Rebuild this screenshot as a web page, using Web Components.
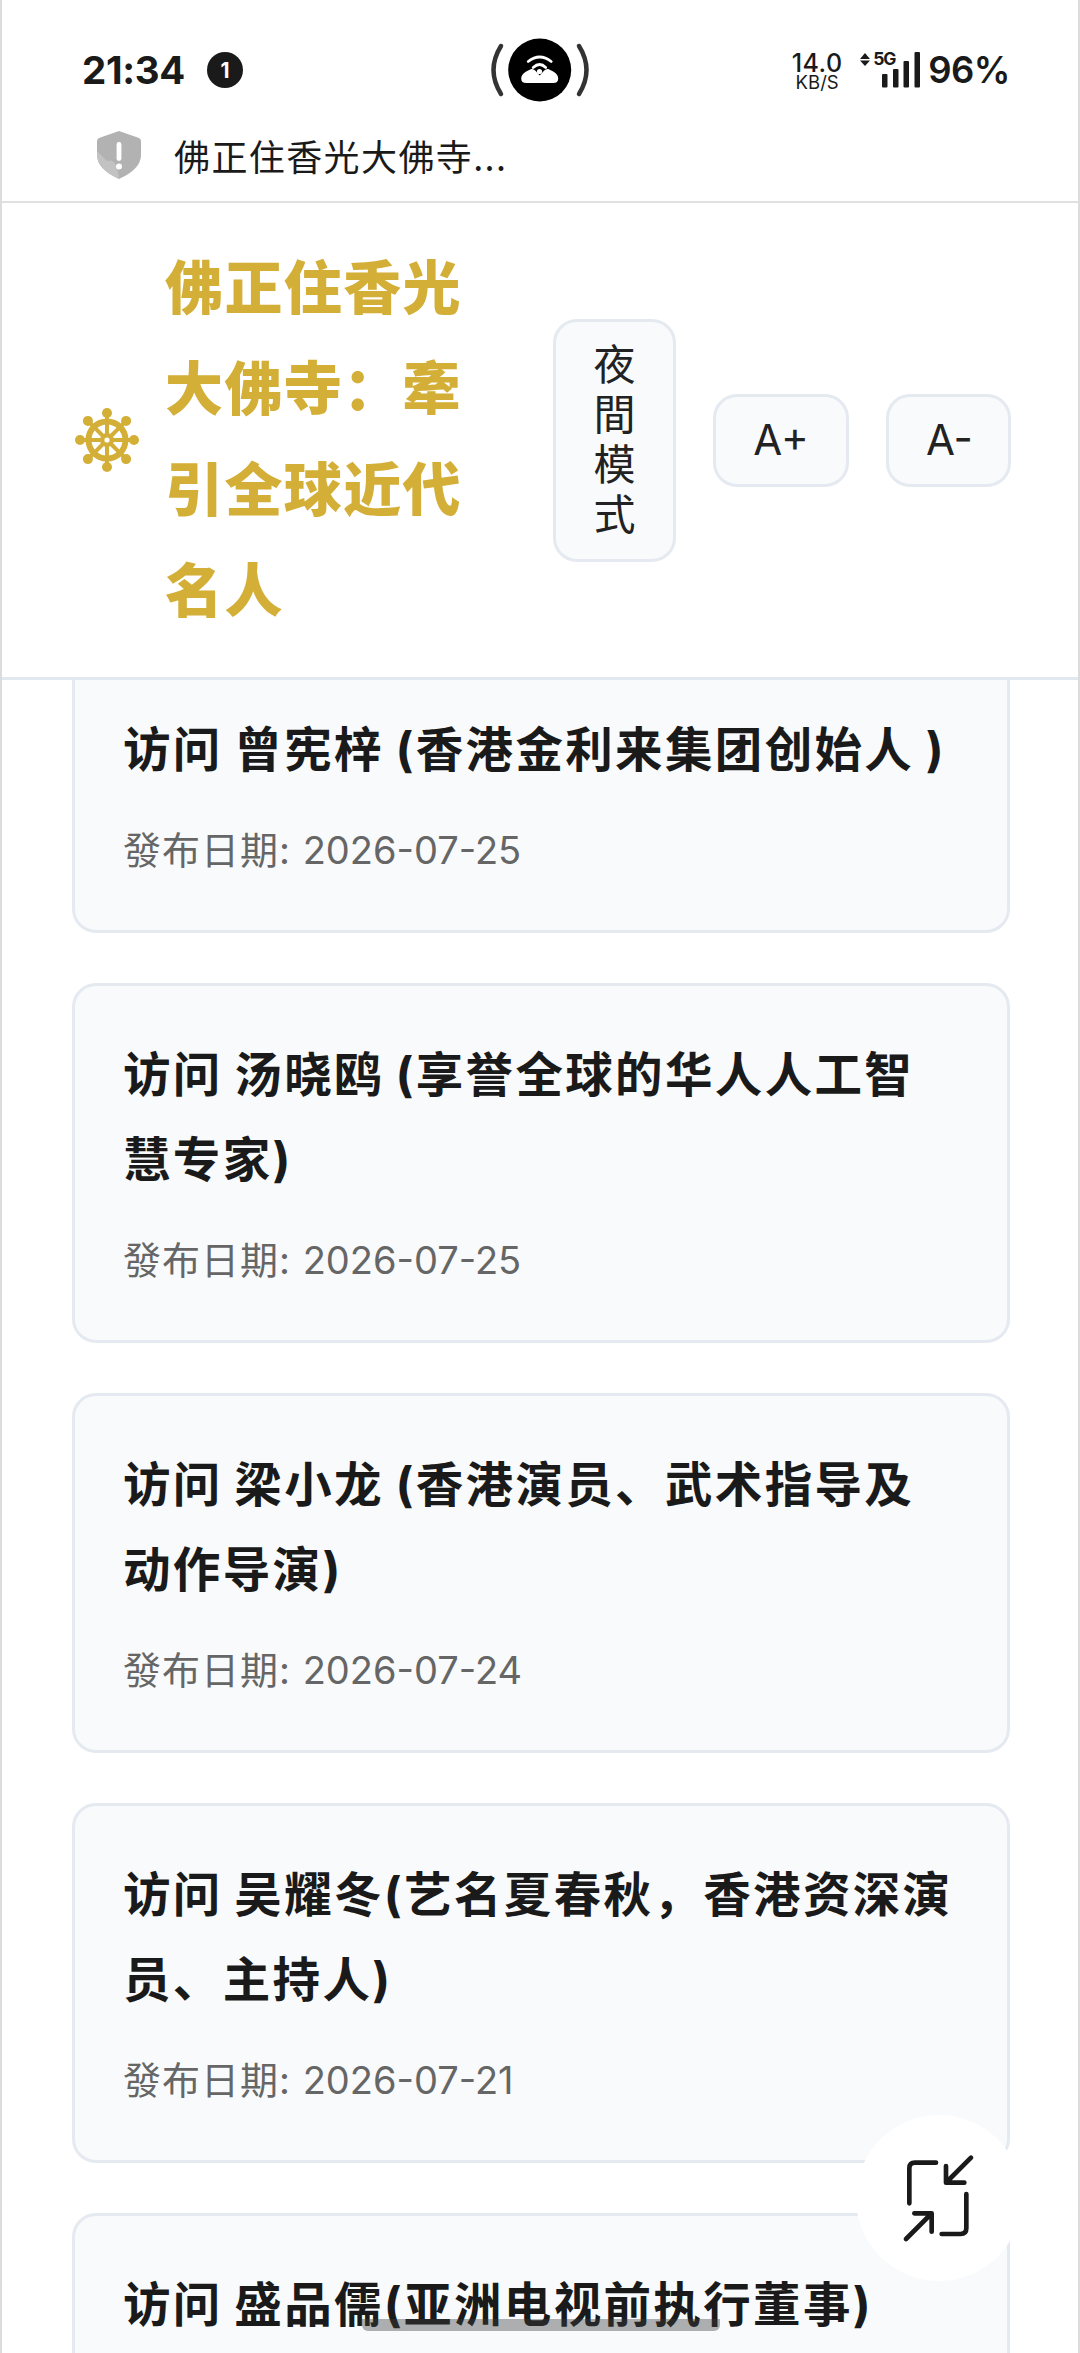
<!DOCTYPE html>
<html lang="zh">
<head>
<meta charset="utf-8">
<title>佛正住香光大佛寺</title>
<style>
  html, body { margin: 0; padding: 0; background: #fff; }
  body {
    width: 1080px;
    height: 2353px;
    overflow: hidden;
    font-family: Inter, "Noto Sans CJK SC", sans-serif;
  }
</style>
</head>
<body>
<phone-frame>
  <status-bar></status-bar>
  <tab-title>佛正住香光大佛寺...</tab-title>
  <site-header>
    佛正住香光大佛寺：牽引全球近代名人
    <font-button slot="actions" style="--w:123px">夜間模式</font-button>
    <font-button slot="actions" style="--w:136px">A+</font-button>
    <font-button slot="actions" style="--w:125px">A-</font-button>
  </site-header>
  <article-list>
    <article-card date="2026-07-25">访问 曾宪梓 (香港金利来集团创始人 )</article-card>
    <article-card date="2026-07-25">访问 汤晓鸥 (享誉全球的华人人工智慧专家)</article-card>
    <article-card date="2026-07-24">访问 梁小龙 (香港演员、武术指导及动作导演)</article-card>
    <article-card date="2026-07-21">访问 吴耀冬(艺名夏春秋，香港资深演员、主持人)</article-card>
    <article-card>访问 盛品儒(亚洲电视前执行董事)</article-card>
  </article-list>
  <float-button></float-button>
  <home-bar></home-bar>
</phone-frame>

<script>
class PhoneFrame extends HTMLElement {
  constructor() {
    super();
    this.attachShadow({ mode: "open" }).innerHTML = `
    <style>
      :host {
        display: flex;
        flex-direction: column;
        position: relative;
        box-sizing: border-box;
        width: 1080px;
        height: 2353px;
        overflow: hidden;
        background: #fff;
        border-left: 2px solid #dcdcdc;
        border-right: 2px solid #dcdcdc;
      }
    </style>
    <slot></slot>`;
  }
}

class StatusBar extends HTMLElement {
  constructor() {
    super();
    this.attachShadow({ mode: "open" }).innerHTML = `
    <style>
      :host {
        display: grid;
        grid-template-columns: 408px 100px 1fr;
        align-items: center;
        box-sizing: border-box;
        height: 120px;
        padding: 20px 68px 0 80px;
        color: #1a1a1a;
        font-family: Inter, sans-serif;
      }
      .left { display: flex; align-items: center; gap: 22px; }
      .time { font-size: 38.5px; font-weight: 700; letter-spacing: -0.3px; }
      .badge {
        width: 36px; height: 36px; border-radius: 50%;
        background: #1a1a1a; color: #fff;
        display: flex; align-items: center; justify-content: center;
        font-size: 21px; font-weight: 700;
      }
      .center { display: block; overflow: visible; }
      .right { display: flex; align-items: center; justify-content: flex-end; }
      .speed { display: flex; flex-direction: column; align-items: center; width: 52px; margin-top: 2px; }
      .speed b { font-size: 25px; font-weight: 500; line-height: 21px; letter-spacing: 0.5px; }
      .speed span { font-size: 18.5px; font-weight: 400; line-height: 16px; }
      .net { position: relative; width: 60px; height: 36px; margin: 0 8px 0 17px; }
      .net svg { position: absolute; left: 0; top: 0; }
      .net b { position: absolute; left: 13px; top: -1px; font-size: 17.5px; line-height: 16px; font-weight: 700; letter-spacing: -1.2px; }
      .pct { font-size: 36.5px; font-weight: 600; letter-spacing: -0.5px; }
    </style>
    <div class="left"><span class="time">21:34</span><span class="badge">1</span></div>
    <svg class="center" width="100" height="64" viewBox="0 0 100 64">
      <path d="M11 8Q-4 32 11 56" fill="none" stroke="#333" stroke-width="4.5" stroke-linecap="round"/>
      <path d="M89 8Q104 32 89 56" fill="none" stroke="#333" stroke-width="4.5" stroke-linecap="round"/>
      <circle cx="49.7" cy="32" r="31.5" fill="#000"/>
      <g transform="translate(18.2 0.5)">
        <path d="M18 44.5H45Q50 44.5 50 40Q50 36 45 33L40 30.5Q38 30 36 32L31.5 37L27 32Q25 30 23 30.5L18 33Q13 36 13 40Q13 44.5 18 44.5Z" fill="#fff"/>
        <path d="M20 23Q31.5 14 43 23M25 29Q31.5 23 37.5 29" fill="none" stroke="#fff" stroke-width="2.8" stroke-linecap="round"/>
        <circle cx="31.3" cy="33" r="2.6" fill="#fff"/>
      </g>
    </svg>
    <div class="right">
      <div class="speed"><b>14.0</b><span>KB/S</span></div>
      <div class="net">
        <svg width="60" height="36" viewBox="0 0 60 36" fill="#1a1a1a">
          <path d="M5 1L10 7H0ZM5 14L10 8.5H0Z"/>
          <rect x="22" y="22" width="5.5" height="13.5" rx="1"/>
          <rect x="33" y="17" width="5.5" height="18.5" rx="1"/>
          <rect x="43.5" y="9" width="5.5" height="26.5" rx="1"/>
          <rect x="54.5" y="0" width="5.5" height="35.5" rx="1"/>
        </svg>
        <b>5G</b>
      </div>
      <span class="pct">96%</span>
    </div>`;
  }
}

class TabTitle extends HTMLElement {
  constructor() {
    super();
    this.attachShadow({ mode: "open" }).innerHTML = `
    <style>
      :host {
        display: flex;
        align-items: center;
        gap: 33px;
        box-sizing: border-box;
        height: 83px;
        padding: 11px 0 22px 95px;
        border-bottom: 2px solid #e0e0e0;
        color: #1a1a1a;
        font: 400 36px/48px "Noto Sans CJK SC", sans-serif;
        letter-spacing: 1.4px;
      }
      svg { flex: none; }
    </style>
    <svg width="44" height="48" viewBox="0 0 44 48">
      <path d="M22 0L42 7Q44 8 44 10V24Q44 38 22 48Q0 38 0 24V10Q0 8 2 7Z" fill="#b2b2b2"/>
      <path d="M22 48Q0 38 0 24V20L10 30Q20 26 22 48Z" fill="#c6c6c6" opacity=".8"/>
      <rect x="19.6" y="11" width="4.8" height="19" rx="2.4" fill="#fff"/>
      <circle cx="22" cy="35.5" r="3" fill="#fff"/>
    </svg>
    <span><slot></slot></span>`;
  }
}

class SiteHeader extends HTMLElement {
  constructor() {
    super();
    const spokes = [0, 45, 90, 135, 180, 225, 270, 315]
      .map((a) => `<g transform="rotate(${a})"><rect x="-2" y="-27" width="4" height="27"/><circle cy="-27" r="5"/></g>`)
      .join("");
    this.attachShadow({ mode: "open" }).innerHTML = `
    <style>
      :host {
        display: flex;
        align-items: center;
        flex: none;
        box-sizing: border-box;
        height: 477px;
        padding: 0 67px 0 73px;
        background: #fff;
        border-bottom: 3px solid #e2e8f0;
        position: relative;
        z-index: 2;
      }
      svg { flex: none; }
      h1 {
        flex: 1;
        margin: -9px 0 0 26px;
        max-width: 300px;
        color: #d4af37;
        font: 900 58px/101px "Noto Sans CJK SC", sans-serif;
        letter-spacing: 1.4px;
      }
      .actions { display: flex; align-items: center; gap: 37px; margin-left: auto; }
    </style>
    <svg width="64" height="64" viewBox="-32 -32 64 64" fill="#d4af37">
      ${spokes}
      <circle r="18.5" fill="none" stroke="#d4af37" stroke-width="6"/>
      <circle r="7"/>
      <circle r="2.6" fill="#fff"/>
    </svg>
    <h1><slot></slot></h1>
    <div class="actions"><slot name="actions"></slot></div>`;
  }
}

class FontButton extends HTMLElement {
  constructor() {
    super();
    this.attachShadow({ mode: "open" }).innerHTML = `
    <style>
      :host {
        display: block;
        box-sizing: border-box;
        width: var(--w, min-content);
        padding: 18.5px 37px;
        background: #f8fafc;
        border: 3px solid #e5eaf1;
        border-radius: 24px;
        color: #222;
        font: 400 42px/50px Inter, "Noto Sans CJK SC", sans-serif;
        text-align: center;
      }
    </style>
    <slot></slot>`;
  }
}

class ArticleList extends HTMLElement {
  constructor() {
    super();
    this.attachShadow({ mode: "open" }).innerHTML = `
    <style>
      :host {
        display: block;
        flex: 1;
        min-height: 0;
        overflow: hidden;
        padding: 0 68px 0 70px;
      }
      .track { display: flex; flex-direction: column; gap: 50px; margin-top: -22px; }
    </style>
    <div class="track"><slot></slot></div>`;
  }
}

class ArticleCard extends HTMLElement {
  constructor() {
    super();
    this.attachShadow({ mode: "open" }).innerHTML = `
    <style>
      :host {
        display: block;
        box-sizing: border-box;
        padding: 46px 51px 50px 48px;
        background: #f8fafc;
        border: 3px solid #e5eaf1;
        border-radius: 24px;
      }
      h3 {
        margin: 0;
        color: #1a1a1a;
        font: 700 47.5px/85px Inter, "Noto Sans CJK SC", sans-serif;
        letter-spacing: 2.35px;
        word-spacing: -2px;
      }
      p {
        margin: 28px 0 0;
        color: #666;
        font: 400 38px/60px Inter, "Noto Sans CJK TC", sans-serif;
      }
      .label { letter-spacing: 1px; }
    </style>
    <h3><slot></slot></h3>
    <p><span class="label">發布日期: </span><span class="date"></span></p>`;
    // the last card runs off the bottom of the window, its date is not visible
    const date = this.getAttribute("date");
    if (date) this.shadowRoot.querySelector(".date").textContent = date;
    else this.shadowRoot.querySelector("p").remove();
  }
}

class FloatButton extends HTMLElement {
  constructor() {
    super();
    this.attachShadow({ mode: "open" }).innerHTML = `
    <style>
      :host {
        position: absolute;
        left: 853.5px;
        top: 2115px;
        width: 166px;
        height: 166px;
        border-radius: 50%;
        background: #fff;
        z-index: 3;
      }
      svg { position: absolute; left: 0; top: 0; }
    </style>
    <svg width="166" height="166" viewBox="225 165 498 498" fill="none" stroke="#1a1a1a" stroke-width="14" stroke-linecap="round" stroke-linejoin="round">
      <path d="M465 308H402Q385 308 385 325V430"/>
      <path d="M570 293L497 366M495 318V368H550"/>
      <path d="M556 402V505Q556 522 539 522H482"/>
      <path d="M375 537L450 462M400 460H452V515"/>
    </svg>`;
  }
}

class HomeBar extends HTMLElement {
  constructor() {
    super();
    this.attachShadow({ mode: "open" }).innerHTML = `
    <style>
      :host {
        position: absolute;
        left: 360px;
        top: 2319px;
        width: 358px;
        height: 12px;
        border-radius: 0 0 6px 6px;
        background: rgba(60, 60, 60, 0.4);
        z-index: 3;
      }
    </style>`;
  }
}

customElements.define("phone-frame", PhoneFrame);
customElements.define("status-bar", StatusBar);
customElements.define("tab-title", TabTitle);
customElements.define("site-header", SiteHeader);
customElements.define("font-button", FontButton);
customElements.define("article-list", ArticleList);
customElements.define("article-card", ArticleCard);
customElements.define("float-button", FloatButton);
customElements.define("home-bar", HomeBar);
</script>
</body>
</html>
